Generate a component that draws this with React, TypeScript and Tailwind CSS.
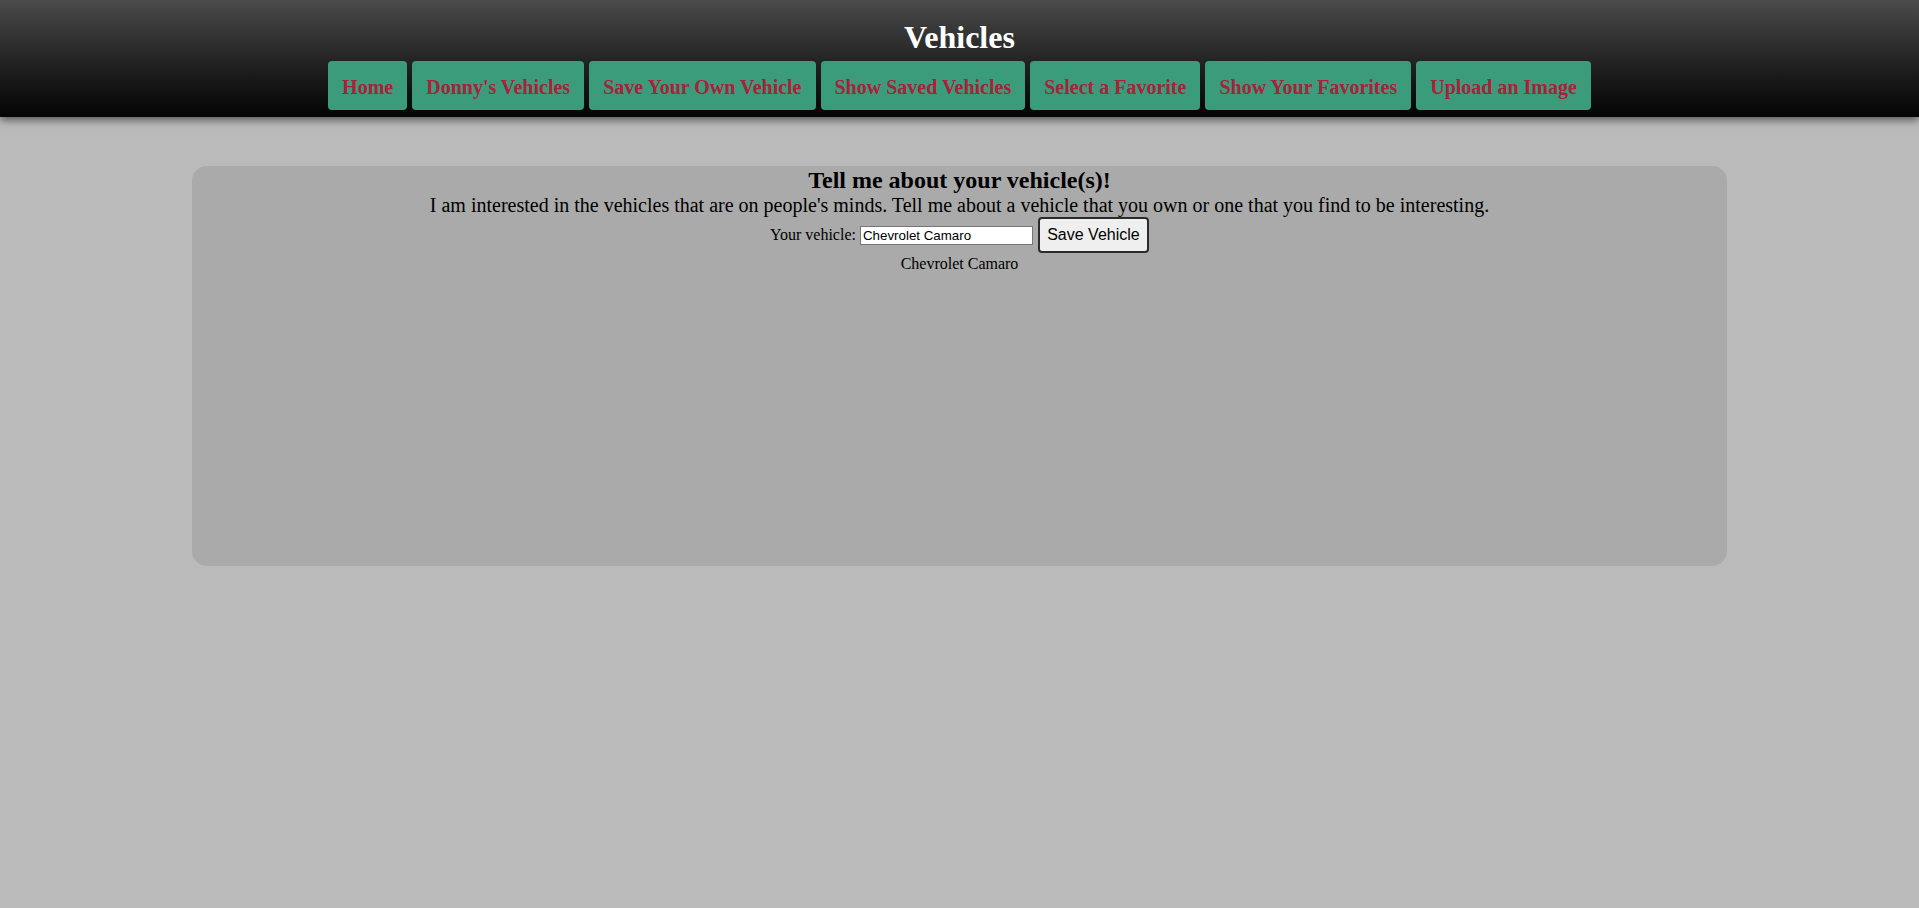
import { useState } from "react"

const navItems = [
  "Home",
  "Donny's Vehicles",
  "Save Your Own Vehicle",
  "Show Saved Vehicles",
  "Select a Favorite",
  "Show Your Favorites",
  "Upload an Image",
]

export default function App() {
  const [vehicle, setVehicle] = useState("Chevrolet Camaro")
  const [saved, setSaved] = useState("Chevrolet Camaro")

  return (
    <div className="min-h-screen bg-[#bababa] font-['Liberation_Serif','Times_New_Roman',serif] text-black">
      {/* Header */}
      <header className="bg-gradient-to-b from-[#4b4b4b] to-[#050505] pt-[19px] pb-[7px] shadow-[0_3px_8px_rgba(0,0,0,0.55)]">
        <h1 className="text-center text-[32px] font-bold leading-[37px] text-white">Vehicles</h1>
        <nav className="mt-[5px] flex justify-center gap-[5px]">
          {navItems.map((item) => (
            <button
              key={item}
              className="flex h-[49px] items-center rounded-[4px] bg-[#3a9c7b] px-[14px] pt-[2px] text-[20px] font-bold text-[#a8223a]"
            >
              {item}
            </button>
          ))}
        </nav>
      </header>

      {/* Main card */}
      <main className="mx-auto mt-[49px] h-[400px] w-[80%] rounded-[15px] bg-[#aaaaaa] text-center">
        <h2 className="text-[24px] font-bold leading-[28px]">Tell me about your vehicle(s)!</h2>
        <p className="text-[20px] leading-[23px]">
          I am interested in the vehicles that are on people's minds. Tell me about a vehicle that you own or one that you find to be interesting.
        </p>
        <div className="flex items-center justify-center text-[16px]">
          <label htmlFor="vehicle">Your vehicle:</label>
          <input
            id="vehicle"
            value={vehicle}
            onChange={(e) => setVehicle(e.target.value)}
            className="ml-[4px] h-[19px] w-[173px] border border-[#767676] bg-white px-[2px] font-['Liberation_Sans',Arial,sans-serif] text-[13.33px] leading-[17px]"
          />
          <button
            onClick={() => setSaved(vehicle)}
            className="ml-[5px] h-[36px] w-[111px] rounded-[4px] border-2 border-[#2b2b2b] bg-[#efefef] font-['Liberation_Sans',Arial,sans-serif] text-[16px]"
          >
            Save Vehicle
          </button>
        </div>
        <p className="mt-[2px] text-[16px] leading-[18px]">{saved}</p>
      </main>
    </div>
  )
}
